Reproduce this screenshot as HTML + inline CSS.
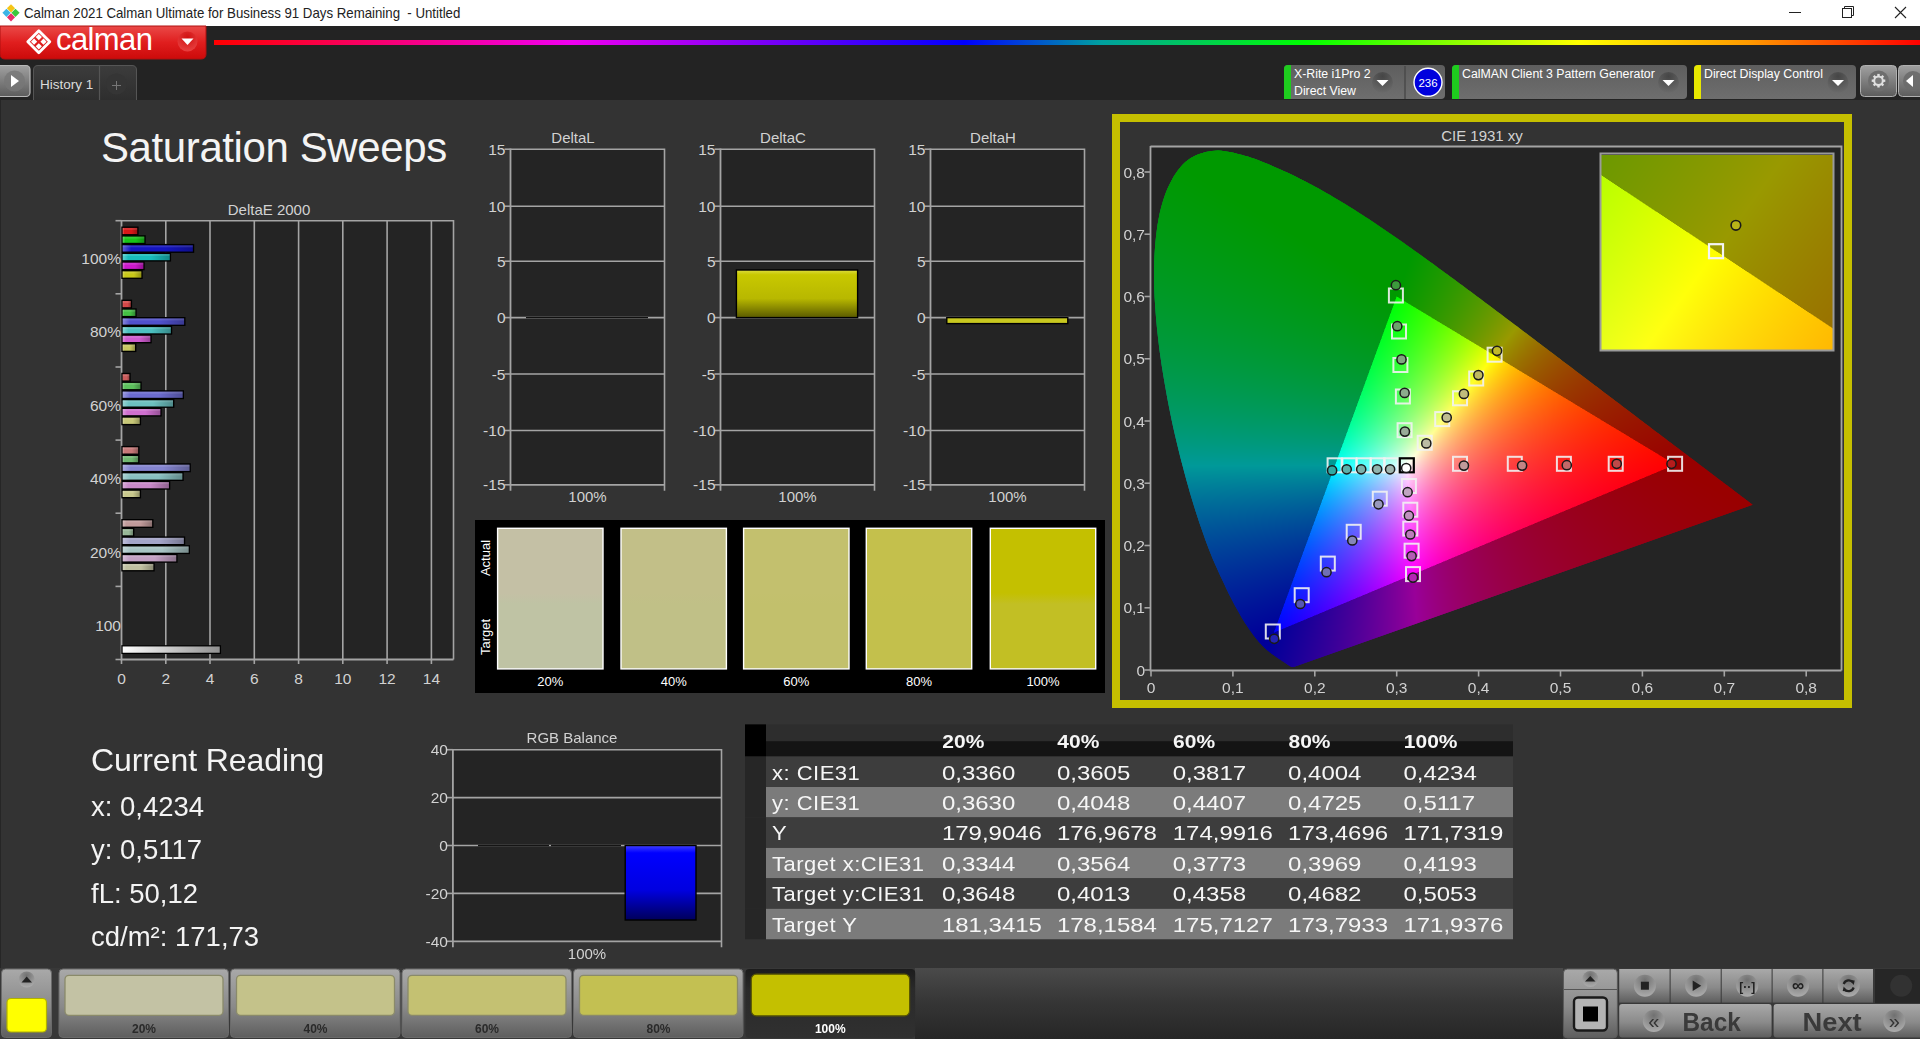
<!DOCTYPE html><html><head><meta charset="utf-8"><title>Calman</title><style>
*{margin:0;padding:0;box-sizing:border-box}
html,body{width:1920px;height:1039px;overflow:hidden;background:#333;font-family:"Liberation Sans",sans-serif}
.a{position:absolute}
#titlebar{left:0;top:0;width:1920px;height:26px;background:#fff}
#topband{left:0;top:26px;width:1920px;height:74px;background:#232323}
#main{left:0;top:100px;width:1920px;height:868px;background:#333;border-left:1px solid #262626}
#bottom{left:0;top:968px;width:1920px;height:71px;background:#383838}
svg text{font-family:"Liberation Sans",sans-serif}
</style></head><body>
<div class="a" id="titlebar"></div><div class="a" id="topband"></div><div class="a" id="main"></div><div class="a" id="bottom"></div>
<svg class="a" style="left:0;top:0" width="1920" height="1039" viewBox="0 0 1920 1039">
<defs>
<linearGradient id="rainbow" x1="0" x2="1" y1="0" y2="0">
<stop offset="0" stop-color="#ff0000"/><stop offset="0.21" stop-color="#f000f0"/><stop offset="0.44" stop-color="#0000ff"/>
<stop offset="0.52" stop-color="#00a0a0"/><stop offset="0.64" stop-color="#00ff00"/><stop offset="0.8" stop-color="#ffff00"/>
<stop offset="0.9" stop-color="#ff9900"/><stop offset="1" stop-color="#ff0000"/></linearGradient>
<linearGradient id="redbtn" x1="0" x2="0" y1="0" y2="1"><stop offset="0" stop-color="#ea4a48"/><stop offset="0.5" stop-color="#e01e1e"/><stop offset="1" stop-color="#cc0a0a"/></linearGradient>
<radialGradient id="reddd" cx="0.5" cy="0.3" r="0.7"><stop offset="0" stop-color="#d01010"/><stop offset="1" stop-color="#e84040"/></radialGradient>
<linearGradient id="grayBtn" x1="0" x2="0" y1="0" y2="1"><stop offset="0" stop-color="#a0a0a0"/><stop offset="1" stop-color="#5c5c5c"/></linearGradient>
<linearGradient id="devBox" x1="0" x2="0" y1="0" y2="1"><stop offset="0" stop-color="#5e5e5e"/><stop offset="1" stop-color="#6e6e6e"/></linearGradient>
<radialGradient id="ddCirc" cx="0.5" cy="0.2" r="0.8"><stop offset="0" stop-color="#454545"/><stop offset="1" stop-color="#6a6a6a"/></radialGradient>
<linearGradient id="tabG" x1="0" x2="0" y1="0" y2="1"><stop offset="0" stop-color="#3c3c3c"/><stop offset="1" stop-color="#2e2e2e"/></linearGradient>
<linearGradient id="barY" x1="0" x2="0" y1="0" y2="1"><stop offset="0" stop-color="#dcdc40"/><stop offset="0.1" stop-color="#c8c800"/><stop offset="0.6" stop-color="#b8b800"/><stop offset="1" stop-color="#5a5a00"/></linearGradient>
<linearGradient id="barB" x1="0" x2="0" y1="0" y2="1"><stop offset="0" stop-color="#4040ff"/><stop offset="0.1" stop-color="#0000ff"/><stop offset="0.6" stop-color="#0000e0"/><stop offset="1" stop-color="#00005a"/></linearGradient>
<linearGradient id="barShade" x1="0" x2="1" y1="0" y2="0"><stop offset="0" stop-color="#fff" stop-opacity="0.3"/><stop offset="0.12" stop-color="#fff" stop-opacity="0"/><stop offset="0.6" stop-color="#000" stop-opacity="0"/><stop offset="1" stop-color="#000" stop-opacity="0.28"/></linearGradient>
<linearGradient id="barW" x1="0" x2="1" y1="0" y2="0"><stop offset="0" stop-color="#ffffff"/><stop offset="1" stop-color="#909090"/></linearGradient>
</defs>
<path d="M11 4.200000000000001L15.1 8.3L11 12.4L6.9 8.3Z" fill="#f5c518"/>
<path d="M15.5 8.700000000000001L19.6 12.8L15.5 16.9L11.4 12.8Z" fill="#3cc83c"/>
<path d="M6.5 8.700000000000001L10.6 12.8L6.5 16.9L2.4000000000000004 12.8Z" fill="#3cb4e6"/>
<path d="M11 13.200000000000001L15.1 17.3L11 21.4L6.9 17.3Z" fill="#e8306a"/>
<text transform="translate(24 17.8) scale(0.914 1)" font-size="14.5" fill="#222">Calman 2021 Calman Ultimate for Business 91 Days Remaining &#160;- Untitled</text>
<path d="M1789 12.5H1801" stroke="#222" stroke-width="1"/>
<rect x="1842.5" y="8.5" width="9" height="9" fill="none" stroke="#222" stroke-width="1"/><path d="M1844.5 8.5V6.5H1853.5V15.5H1851.5" fill="none" stroke="#222" stroke-width="1"/>
<path d="M1895 7L1906 18M1906 7L1895 18" stroke="#222" stroke-width="1.1"/>
<path d="M0 26H206V54Q206 59 201 59H5Q0 59 0 54Z" fill="url(#redbtn)" stroke="#b01010" stroke-width="1"/>
<path d="M38.8 30.700000000000003L49.8 41.7L38.8 52.7L27.799999999999997 41.7Z" fill="none" stroke="#fff" stroke-width="2.8" stroke-linejoin="round"/>
<path d="M38.8 34.0L41.9 37.1L38.8 40.2L35.699999999999996 37.1Z" fill="#fff"/>
<path d="M43.5 38.6L46.6 41.7L43.5 44.800000000000004L40.4 41.7Z" fill="#fff"/>
<path d="M34.099999999999994 38.6L37.199999999999996 41.7L34.099999999999994 44.800000000000004L30.999999999999993 41.7Z" fill="#fff"/>
<path d="M38.8 43.2L41.9 46.300000000000004L38.8 49.400000000000006L35.699999999999996 46.300000000000004Z" fill="#fff"/>
<text x="56" y="49.5" font-size="31" fill="#fff" letter-spacing="-0.6" font-weight="normal">calman</text>
<circle cx="187.5" cy="41.5" r="10" fill="url(#reddd)"/>
<path d="M181.5 38.5H193.5L187.5 45Z" fill="#fff"/>
<rect x="214" y="40" width="1706" height="5" fill="url(#rainbow)"/>
<rect x="-4" y="65.5" width="34" height="31" rx="4" fill="url(#grayBtn)" stroke="#b8b8b8" stroke-width="1.2"/>
<circle cx="14.5" cy="81" r="10.5" fill="#777" opacity="0.8"/>
<path d="M11 75L19 81L11 87Z" fill="#fff"/>
<path d="M33.5 100V70Q33.5 65.5 38 65.5H132Q136.5 65.5 136.5 70V100" fill="url(#tabG)" stroke="#555" stroke-width="1"/>
<path d="M99.5 66V100" stroke="#555" stroke-width="1.2"/>
<text x="40" y="88.5" font-size="13.5" fill="#dcdcdc">History 1</text>
<circle cx="116.5" cy="84" r="10.5" fill="#353535"/>
<path d="M112 85.5H121M116.5 81V90" stroke="#777" stroke-width="1"/>
<rect x="1284" y="65" width="161" height="34" rx="4" fill="url(#devBox)"/>
<path d="M1284 99V69Q1284 65 1288 65H1291V99Z" fill="#1ecc1e"/>
<text x="1294" y="78" font-size="12.3" fill="#fff">X-Rite i1Pro 2</text>
<text x="1294" y="95" font-size="12.3" fill="#fff">Direct View</text>
<circle cx="1382.5" cy="82.5" r="10.5" fill="url(#ddCirc)"/><path d="M1376.5 80.0H1388.5L1382.5 86.0Z" fill="#fff"/>
<path d="M1405 66V99" stroke="#4a4a4a" stroke-width="1.5"/>
<circle cx="1428" cy="82.3" r="14" fill="#0000dd" stroke="#fff" stroke-width="1.4"/>
<text x="1428" y="86.5" font-size="11.5" fill="#fff" text-anchor="middle">236</text>
<rect x="1452" y="65" width="235" height="34" rx="4" fill="url(#devBox)"/>
<path d="M1452 99V69Q1452 65 1456 65H1459V99Z" fill="#1ecc1e"/>
<text x="1462" y="78" font-size="12.3" fill="#fff">CalMAN Client 3 Pattern Generator</text>
<circle cx="1668.5" cy="82.5" r="10.5" fill="url(#ddCirc)"/><path d="M1662.5 80.0H1674.5L1668.5 86.0Z" fill="#fff"/>
<rect x="1694" y="65" width="162" height="34" rx="4" fill="url(#devBox)"/>
<path d="M1694 99V69Q1694 65 1698 65H1701V99Z" fill="#e8e800"/>
<text x="1704" y="78" font-size="12.3" fill="#fff">Direct Display Control</text>
<circle cx="1838" cy="82.5" r="10.5" fill="url(#ddCirc)"/><path d="M1832 80.0H1844L1838 86.0Z" fill="#fff"/>
<rect x="1860.5" y="65.5" width="36" height="31" rx="4" fill="url(#grayBtn)" stroke="#b0b0b0" stroke-width="1"/>
<circle cx="1878.5" cy="81" r="10.5" fill="#6e6e6e"/>
<rect x="1877.3" y="73.9" width="2.4" height="3" fill="#e0e0e0" transform="rotate(0 1878.5 80.7)"/><rect x="1877.3" y="73.9" width="2.4" height="3" fill="#e0e0e0" transform="rotate(45 1878.5 80.7)"/><rect x="1877.3" y="73.9" width="2.4" height="3" fill="#e0e0e0" transform="rotate(90 1878.5 80.7)"/><rect x="1877.3" y="73.9" width="2.4" height="3" fill="#e0e0e0" transform="rotate(135 1878.5 80.7)"/><rect x="1877.3" y="73.9" width="2.4" height="3" fill="#e0e0e0" transform="rotate(180 1878.5 80.7)"/><rect x="1877.3" y="73.9" width="2.4" height="3" fill="#e0e0e0" transform="rotate(225 1878.5 80.7)"/><rect x="1877.3" y="73.9" width="2.4" height="3" fill="#e0e0e0" transform="rotate(270 1878.5 80.7)"/><rect x="1877.3" y="73.9" width="2.4" height="3" fill="#e0e0e0" transform="rotate(315 1878.5 80.7)"/>
<circle cx="1878.5" cy="80.7" r="4.3" fill="#7a7a7a" stroke="#e0e0e0" stroke-width="2"/>
<rect x="1898.5" y="65.5" width="30" height="31" rx="4" fill="url(#grayBtn)" stroke="#b0b0b0" stroke-width="1"/>
<circle cx="1913" cy="81" r="10" fill="#6c6c6c" opacity="0.9"/>
<path d="M1906 81L1913 75V87Z" fill="#fff"/>
<text x="101" y="162" font-size="42" fill="#f4f4f4" letter-spacing="-0.4">Saturation Sweeps</text>
<rect x="121.5" y="220.7" width="332.0" height="438.8" fill="#242424"/>
<path d="M165.8 220.7V659.5" stroke="#a4a4a4" stroke-width="1.6"/>
<path d="M210.0 220.7V659.5" stroke="#a4a4a4" stroke-width="1.6"/>
<path d="M254.3 220.7V659.5" stroke="#a4a4a4" stroke-width="1.6"/>
<path d="M298.6 220.7V659.5" stroke="#a4a4a4" stroke-width="1.6"/>
<path d="M342.8 220.7V659.5" stroke="#a4a4a4" stroke-width="1.6"/>
<path d="M387.1 220.7V659.5" stroke="#a4a4a4" stroke-width="1.6"/>
<path d="M431.4 220.7V659.5" stroke="#a4a4a4" stroke-width="1.6"/>
<path d="M121.5 220.7H453.5V659.5" fill="none" stroke="#a4a4a4" stroke-width="1.6"/>
<path d="M121.5 219.89999999999998V659.5H453.5" fill="none" stroke="#a4a4a4" stroke-width="1.8"/>
<path d="M115.5 220.7H121.5" stroke="#a4a4a4" stroke-width="1.6"/>
<path d="M115.5 293.8H121.5" stroke="#a4a4a4" stroke-width="1.6"/>
<path d="M115.5 367.0H121.5" stroke="#a4a4a4" stroke-width="1.6"/>
<path d="M115.5 440.1H121.5" stroke="#a4a4a4" stroke-width="1.6"/>
<path d="M115.5 513.2H121.5" stroke="#a4a4a4" stroke-width="1.6"/>
<path d="M115.5 586.4H121.5" stroke="#a4a4a4" stroke-width="1.6"/>
<path d="M115.5 659.5H121.5" stroke="#a4a4a4" stroke-width="1.6"/>
<path d="M121.5 659.5V664.0" stroke="#a4a4a4" stroke-width="1.6"/>
<text x="121.5" y="684" font-size="15.5" fill="#d2d2d2" text-anchor="middle">0</text>
<path d="M165.8 659.5V664.0" stroke="#a4a4a4" stroke-width="1.6"/>
<text x="165.8" y="684" font-size="15.5" fill="#d2d2d2" text-anchor="middle">2</text>
<path d="M210.0 659.5V664.0" stroke="#a4a4a4" stroke-width="1.6"/>
<text x="210.0" y="684" font-size="15.5" fill="#d2d2d2" text-anchor="middle">4</text>
<path d="M254.3 659.5V664.0" stroke="#a4a4a4" stroke-width="1.6"/>
<text x="254.3" y="684" font-size="15.5" fill="#d2d2d2" text-anchor="middle">6</text>
<path d="M298.6 659.5V664.0" stroke="#a4a4a4" stroke-width="1.6"/>
<text x="298.6" y="684" font-size="15.5" fill="#d2d2d2" text-anchor="middle">8</text>
<path d="M342.8 659.5V664.0" stroke="#a4a4a4" stroke-width="1.6"/>
<text x="342.8" y="684" font-size="15.5" fill="#d2d2d2" text-anchor="middle">10</text>
<path d="M387.1 659.5V664.0" stroke="#a4a4a4" stroke-width="1.6"/>
<text x="387.1" y="684" font-size="15.5" fill="#d2d2d2" text-anchor="middle">12</text>
<path d="M431.4 659.5V664.0" stroke="#a4a4a4" stroke-width="1.6"/>
<text x="431.4" y="684" font-size="15.5" fill="#d2d2d2" text-anchor="middle">14</text>
<text x="269" y="215" font-size="15" fill="#d2d2d2" text-anchor="middle">DeltaE 2000</text>
<text x="121" y="263.8" font-size="15.5" fill="#d2d2d2" text-anchor="end">100%</text>
<text x="121" y="337.3" font-size="15.5" fill="#d2d2d2" text-anchor="end">80%</text>
<text x="121" y="410.8" font-size="15.5" fill="#d2d2d2" text-anchor="end">60%</text>
<text x="121" y="484.4" font-size="15.5" fill="#d2d2d2" text-anchor="end">40%</text>
<text x="121" y="557.9" font-size="15.5" fill="#d2d2d2" text-anchor="end">20%</text>
<text x="121" y="631.4" font-size="15.5" fill="#d2d2d2" text-anchor="end">100</text>
<rect x="122.0" y="227.2" width="15.9" height="7.6" fill="#d81818" stroke="#000" stroke-width="1.4"/>
<rect x="122.7" y="227.9" width="14.5" height="6.2" fill="url(#barShade)"/>
<rect x="122.7" y="227.9" width="14.5" height="2" fill="#fff" opacity="0.12"/>
<rect x="122.0" y="235.9" width="23.0" height="7.6" fill="#18c418" stroke="#000" stroke-width="1.4"/>
<rect x="122.7" y="236.6" width="21.6" height="6.2" fill="url(#barShade)"/>
<rect x="122.7" y="236.6" width="21.6" height="2" fill="#fff" opacity="0.12"/>
<rect x="122.0" y="244.6" width="71.5" height="7.6" fill="#1414c0" stroke="#000" stroke-width="1.4"/>
<rect x="122.7" y="245.3" width="70.1" height="6.2" fill="url(#barShade)"/>
<rect x="122.7" y="245.3" width="70.1" height="2" fill="#fff" opacity="0.12"/>
<rect x="122.0" y="253.3" width="48.4" height="7.6" fill="#18bcbc" stroke="#000" stroke-width="1.4"/>
<rect x="122.7" y="254.0" width="47.0" height="6.2" fill="url(#barShade)"/>
<rect x="122.7" y="254.0" width="47.0" height="2" fill="#fff" opacity="0.12"/>
<rect x="122.0" y="262.0" width="22.0" height="7.6" fill="#cc18cc" stroke="#000" stroke-width="1.4"/>
<rect x="122.7" y="262.7" width="20.6" height="6.2" fill="url(#barShade)"/>
<rect x="122.7" y="262.7" width="20.6" height="2" fill="#fff" opacity="0.12"/>
<rect x="122.0" y="270.7" width="20.0" height="7.6" fill="#c8c818" stroke="#000" stroke-width="1.4"/>
<rect x="122.7" y="271.4" width="18.6" height="6.2" fill="url(#barShade)"/>
<rect x="122.7" y="271.4" width="18.6" height="2" fill="#fff" opacity="0.12"/>
<rect x="122.0" y="300.3" width="9.4" height="7.6" fill="#d44848" stroke="#000" stroke-width="1.4"/>
<rect x="122.7" y="301.0" width="8.0" height="6.2" fill="url(#barShade)"/>
<rect x="122.7" y="301.0" width="8.0" height="2" fill="#fff" opacity="0.12"/>
<rect x="122.0" y="309.0" width="14.0" height="7.6" fill="#44c044" stroke="#000" stroke-width="1.4"/>
<rect x="122.7" y="309.7" width="12.6" height="6.2" fill="url(#barShade)"/>
<rect x="122.7" y="309.7" width="12.6" height="2" fill="#fff" opacity="0.12"/>
<rect x="122.0" y="317.7" width="62.8" height="7.6" fill="#5050cc" stroke="#000" stroke-width="1.4"/>
<rect x="122.7" y="318.4" width="61.4" height="6.2" fill="url(#barShade)"/>
<rect x="122.7" y="318.4" width="61.4" height="2" fill="#fff" opacity="0.12"/>
<rect x="122.0" y="326.4" width="49.5" height="7.6" fill="#4cc0c0" stroke="#000" stroke-width="1.4"/>
<rect x="122.7" y="327.1" width="48.1" height="6.2" fill="url(#barShade)"/>
<rect x="122.7" y="327.1" width="48.1" height="2" fill="#fff" opacity="0.12"/>
<rect x="122.0" y="335.1" width="29.0" height="7.6" fill="#d05cd0" stroke="#000" stroke-width="1.4"/>
<rect x="122.7" y="335.8" width="27.6" height="6.2" fill="url(#barShade)"/>
<rect x="122.7" y="335.8" width="27.6" height="2" fill="#fff" opacity="0.12"/>
<rect x="122.0" y="343.8" width="13.7" height="7.6" fill="#c8c860" stroke="#000" stroke-width="1.4"/>
<rect x="122.7" y="344.5" width="12.3" height="6.2" fill="url(#barShade)"/>
<rect x="122.7" y="344.5" width="12.3" height="2" fill="#fff" opacity="0.12"/>
<rect x="122.0" y="373.5" width="8.0" height="7.6" fill="#cc5c5c" stroke="#000" stroke-width="1.4"/>
<rect x="122.7" y="374.2" width="6.6" height="6.2" fill="url(#barShade)"/>
<rect x="122.7" y="374.2" width="6.6" height="2" fill="#fff" opacity="0.12"/>
<rect x="122.0" y="382.2" width="19.0" height="7.6" fill="#5cc05c" stroke="#000" stroke-width="1.4"/>
<rect x="122.7" y="382.9" width="17.6" height="6.2" fill="url(#barShade)"/>
<rect x="122.7" y="382.9" width="17.6" height="2" fill="#fff" opacity="0.12"/>
<rect x="122.0" y="390.9" width="61.3" height="7.6" fill="#6c6cd0" stroke="#000" stroke-width="1.4"/>
<rect x="122.7" y="391.6" width="59.9" height="6.2" fill="url(#barShade)"/>
<rect x="122.7" y="391.6" width="59.9" height="2" fill="#fff" opacity="0.12"/>
<rect x="122.0" y="399.6" width="51.7" height="7.6" fill="#6cc0c0" stroke="#000" stroke-width="1.4"/>
<rect x="122.7" y="400.3" width="50.3" height="6.2" fill="url(#barShade)"/>
<rect x="122.7" y="400.3" width="50.3" height="2" fill="#fff" opacity="0.12"/>
<rect x="122.0" y="408.3" width="39.0" height="7.6" fill="#d070d0" stroke="#000" stroke-width="1.4"/>
<rect x="122.7" y="409.0" width="37.6" height="6.2" fill="url(#barShade)"/>
<rect x="122.7" y="409.0" width="37.6" height="2" fill="#fff" opacity="0.12"/>
<rect x="122.0" y="417.0" width="18.4" height="7.6" fill="#c8c878" stroke="#000" stroke-width="1.4"/>
<rect x="122.7" y="417.7" width="17.0" height="6.2" fill="url(#barShade)"/>
<rect x="122.7" y="417.7" width="17.0" height="2" fill="#fff" opacity="0.12"/>
<rect x="122.0" y="446.6" width="16.8" height="7.6" fill="#c87878" stroke="#000" stroke-width="1.4"/>
<rect x="122.7" y="447.3" width="15.4" height="6.2" fill="url(#barShade)"/>
<rect x="122.7" y="447.3" width="15.4" height="2" fill="#fff" opacity="0.12"/>
<rect x="122.0" y="455.3" width="16.8" height="7.6" fill="#70b870" stroke="#000" stroke-width="1.4"/>
<rect x="122.7" y="456.0" width="15.4" height="6.2" fill="url(#barShade)"/>
<rect x="122.7" y="456.0" width="15.4" height="2" fill="#fff" opacity="0.12"/>
<rect x="122.0" y="464.0" width="68.2" height="7.6" fill="#8484d0" stroke="#000" stroke-width="1.4"/>
<rect x="122.7" y="464.7" width="66.8" height="6.2" fill="url(#barShade)"/>
<rect x="122.7" y="464.7" width="66.8" height="2" fill="#fff" opacity="0.12"/>
<rect x="122.0" y="472.7" width="61.0" height="7.6" fill="#88c0c0" stroke="#000" stroke-width="1.4"/>
<rect x="122.7" y="473.4" width="59.6" height="6.2" fill="url(#barShade)"/>
<rect x="122.7" y="473.4" width="59.6" height="2" fill="#fff" opacity="0.12"/>
<rect x="122.0" y="481.4" width="47.6" height="7.6" fill="#c888c8" stroke="#000" stroke-width="1.4"/>
<rect x="122.7" y="482.1" width="46.2" height="6.2" fill="url(#barShade)"/>
<rect x="122.7" y="482.1" width="46.2" height="2" fill="#fff" opacity="0.12"/>
<rect x="122.0" y="490.1" width="18.4" height="7.6" fill="#c8c88c" stroke="#000" stroke-width="1.4"/>
<rect x="122.7" y="490.8" width="17.0" height="6.2" fill="url(#barShade)"/>
<rect x="122.7" y="490.8" width="17.0" height="2" fill="#fff" opacity="0.12"/>
<rect x="122.0" y="519.7" width="30.8" height="7.6" fill="#c09a9a" stroke="#000" stroke-width="1.4"/>
<rect x="122.7" y="520.4" width="29.4" height="6.2" fill="url(#barShade)"/>
<rect x="122.7" y="520.4" width="29.4" height="2" fill="#fff" opacity="0.12"/>
<rect x="122.0" y="528.4" width="11.7" height="7.6" fill="#98b898" stroke="#000" stroke-width="1.4"/>
<rect x="122.7" y="529.1" width="10.3" height="6.2" fill="url(#barShade)"/>
<rect x="122.7" y="529.1" width="10.3" height="2" fill="#fff" opacity="0.12"/>
<rect x="122.0" y="537.1" width="62.5" height="7.6" fill="#a4a4c8" stroke="#000" stroke-width="1.4"/>
<rect x="122.7" y="537.8" width="61.1" height="6.2" fill="url(#barShade)"/>
<rect x="122.7" y="537.8" width="61.1" height="2" fill="#fff" opacity="0.12"/>
<rect x="122.0" y="545.8" width="67.3" height="7.6" fill="#a8c4c4" stroke="#000" stroke-width="1.4"/>
<rect x="122.7" y="546.5" width="65.9" height="6.2" fill="url(#barShade)"/>
<rect x="122.7" y="546.5" width="65.9" height="2" fill="#fff" opacity="0.12"/>
<rect x="122.0" y="554.5" width="54.9" height="7.6" fill="#c4a0c4" stroke="#000" stroke-width="1.4"/>
<rect x="122.7" y="555.2" width="53.5" height="6.2" fill="url(#barShade)"/>
<rect x="122.7" y="555.2" width="53.5" height="2" fill="#fff" opacity="0.12"/>
<rect x="122.0" y="563.2" width="32.0" height="7.6" fill="#c0c0a0" stroke="#000" stroke-width="1.4"/>
<rect x="122.7" y="563.9" width="30.6" height="6.2" fill="url(#barShade)"/>
<rect x="122.7" y="563.9" width="30.6" height="2" fill="#fff" opacity="0.12"/>
<rect x="122.0" y="645.8" width="98.4" height="7.6" fill="url(#barW)" stroke="#000" stroke-width="1.3"/>
<rect x="510.5" y="149.2" width="154" height="335.6" fill="#242424"/>
<path d="M510.5 206.2H664.5" stroke="#a4a4a4" stroke-width="1.6"/>
<path d="M510.5 261.2H664.5" stroke="#a4a4a4" stroke-width="1.6"/>
<path d="M510.5 317.6H664.5" stroke="#a4a4a4" stroke-width="1.6"/>
<path d="M510.5 374.0H664.5" stroke="#a4a4a4" stroke-width="1.6"/>
<path d="M510.5 430.5H664.5" stroke="#a4a4a4" stroke-width="1.6"/>
<path d="M510.5 149.2H664.5V490.8" fill="none" stroke="#a4a4a4" stroke-width="1.6"/>
<path d="M510.5 148.39999999999998V490.8M510.5 484.8H664.5" fill="none" stroke="#a4a4a4" stroke-width="1.8"/>
<path d="M504.5 149.2H510.5" stroke="#a4a4a4" stroke-width="1.6"/>
<text x="505.5" y="154.7" font-size="15.5" fill="#d2d2d2" text-anchor="end">15</text>
<path d="M504.5 206.2H510.5" stroke="#a4a4a4" stroke-width="1.6"/>
<text x="505.5" y="211.7" font-size="15.5" fill="#d2d2d2" text-anchor="end">10</text>
<path d="M504.5 261.2H510.5" stroke="#a4a4a4" stroke-width="1.6"/>
<text x="505.5" y="266.7" font-size="15.5" fill="#d2d2d2" text-anchor="end">5</text>
<path d="M504.5 317.6H510.5" stroke="#a4a4a4" stroke-width="1.6"/>
<text x="505.5" y="323.1" font-size="15.5" fill="#d2d2d2" text-anchor="end">0</text>
<path d="M504.5 374.0H510.5" stroke="#a4a4a4" stroke-width="1.6"/>
<text x="505.5" y="379.5" font-size="15.5" fill="#d2d2d2" text-anchor="end">-5</text>
<path d="M504.5 430.5H510.5" stroke="#a4a4a4" stroke-width="1.6"/>
<text x="505.5" y="436.0" font-size="15.5" fill="#d2d2d2" text-anchor="end">-10</text>
<path d="M504.5 484.8H510.5" stroke="#a4a4a4" stroke-width="1.6"/>
<text x="505.5" y="490.3" font-size="15.5" fill="#d2d2d2" text-anchor="end">-15</text>
<text x="573.0" y="143" font-size="15" fill="#d2d2d2" text-anchor="middle">DeltaL</text>
<text x="587.5" y="502" font-size="15" fill="#d2d2d2" text-anchor="middle">100%</text>
<rect x="720.5" y="149.2" width="154" height="335.6" fill="#242424"/>
<path d="M720.5 206.2H874.5" stroke="#a4a4a4" stroke-width="1.6"/>
<path d="M720.5 261.2H874.5" stroke="#a4a4a4" stroke-width="1.6"/>
<path d="M720.5 317.6H874.5" stroke="#a4a4a4" stroke-width="1.6"/>
<path d="M720.5 374.0H874.5" stroke="#a4a4a4" stroke-width="1.6"/>
<path d="M720.5 430.5H874.5" stroke="#a4a4a4" stroke-width="1.6"/>
<path d="M720.5 149.2H874.5V490.8" fill="none" stroke="#a4a4a4" stroke-width="1.6"/>
<path d="M720.5 148.39999999999998V490.8M720.5 484.8H874.5" fill="none" stroke="#a4a4a4" stroke-width="1.8"/>
<path d="M714.5 149.2H720.5" stroke="#a4a4a4" stroke-width="1.6"/>
<text x="715.5" y="154.7" font-size="15.5" fill="#d2d2d2" text-anchor="end">15</text>
<path d="M714.5 206.2H720.5" stroke="#a4a4a4" stroke-width="1.6"/>
<text x="715.5" y="211.7" font-size="15.5" fill="#d2d2d2" text-anchor="end">10</text>
<path d="M714.5 261.2H720.5" stroke="#a4a4a4" stroke-width="1.6"/>
<text x="715.5" y="266.7" font-size="15.5" fill="#d2d2d2" text-anchor="end">5</text>
<path d="M714.5 317.6H720.5" stroke="#a4a4a4" stroke-width="1.6"/>
<text x="715.5" y="323.1" font-size="15.5" fill="#d2d2d2" text-anchor="end">0</text>
<path d="M714.5 374.0H720.5" stroke="#a4a4a4" stroke-width="1.6"/>
<text x="715.5" y="379.5" font-size="15.5" fill="#d2d2d2" text-anchor="end">-5</text>
<path d="M714.5 430.5H720.5" stroke="#a4a4a4" stroke-width="1.6"/>
<text x="715.5" y="436.0" font-size="15.5" fill="#d2d2d2" text-anchor="end">-10</text>
<path d="M714.5 484.8H720.5" stroke="#a4a4a4" stroke-width="1.6"/>
<text x="715.5" y="490.3" font-size="15.5" fill="#d2d2d2" text-anchor="end">-15</text>
<text x="783.0" y="143" font-size="15" fill="#d2d2d2" text-anchor="middle">DeltaC</text>
<text x="797.5" y="502" font-size="15" fill="#d2d2d2" text-anchor="middle">100%</text>
<rect x="930.5" y="149.2" width="154" height="335.6" fill="#242424"/>
<path d="M930.5 206.2H1084.5" stroke="#a4a4a4" stroke-width="1.6"/>
<path d="M930.5 261.2H1084.5" stroke="#a4a4a4" stroke-width="1.6"/>
<path d="M930.5 317.6H1084.5" stroke="#a4a4a4" stroke-width="1.6"/>
<path d="M930.5 374.0H1084.5" stroke="#a4a4a4" stroke-width="1.6"/>
<path d="M930.5 430.5H1084.5" stroke="#a4a4a4" stroke-width="1.6"/>
<path d="M930.5 149.2H1084.5V490.8" fill="none" stroke="#a4a4a4" stroke-width="1.6"/>
<path d="M930.5 148.39999999999998V490.8M930.5 484.8H1084.5" fill="none" stroke="#a4a4a4" stroke-width="1.8"/>
<path d="M924.5 149.2H930.5" stroke="#a4a4a4" stroke-width="1.6"/>
<text x="925.5" y="154.7" font-size="15.5" fill="#d2d2d2" text-anchor="end">15</text>
<path d="M924.5 206.2H930.5" stroke="#a4a4a4" stroke-width="1.6"/>
<text x="925.5" y="211.7" font-size="15.5" fill="#d2d2d2" text-anchor="end">10</text>
<path d="M924.5 261.2H930.5" stroke="#a4a4a4" stroke-width="1.6"/>
<text x="925.5" y="266.7" font-size="15.5" fill="#d2d2d2" text-anchor="end">5</text>
<path d="M924.5 317.6H930.5" stroke="#a4a4a4" stroke-width="1.6"/>
<text x="925.5" y="323.1" font-size="15.5" fill="#d2d2d2" text-anchor="end">0</text>
<path d="M924.5 374.0H930.5" stroke="#a4a4a4" stroke-width="1.6"/>
<text x="925.5" y="379.5" font-size="15.5" fill="#d2d2d2" text-anchor="end">-5</text>
<path d="M924.5 430.5H930.5" stroke="#a4a4a4" stroke-width="1.6"/>
<text x="925.5" y="436.0" font-size="15.5" fill="#d2d2d2" text-anchor="end">-10</text>
<path d="M924.5 484.8H930.5" stroke="#a4a4a4" stroke-width="1.6"/>
<text x="925.5" y="490.3" font-size="15.5" fill="#d2d2d2" text-anchor="end">-15</text>
<text x="993.0" y="143" font-size="15" fill="#d2d2d2" text-anchor="middle">DeltaH</text>
<text x="1007.5" y="502" font-size="15" fill="#d2d2d2" text-anchor="middle">100%</text>
<path d="M526 317.6H648" stroke="#111" stroke-width="1.2"/>
<rect x="736.4" y="270" width="121.2" height="47.6" fill="url(#barY)" stroke="#000" stroke-width="1.4"/>
<rect x="946.8" y="317.6" width="121" height="6" fill="#c8c820" stroke="#000" stroke-width="1.4"/>
<rect x="475" y="520" width="630" height="173" fill="#000"/>
<defs><linearGradient id="pg0" x1="0" x2="0" y1="0" y2="1"><stop offset="0.46" stop-color="#c4c0a5"/><stop offset="0.54" stop-color="#bfc3a4"/></linearGradient></defs>
<rect x="497.6" y="528.3" width="105.4" height="140.6" fill="url(#pg0)" stroke="#fff" stroke-width="1.4"/>
<text x="550.3" y="685.5" font-size="13" fill="#fff" text-anchor="middle">20%</text>
<defs><linearGradient id="pg1" x1="0" x2="0" y1="0" y2="1"><stop offset="0.46" stop-color="#c2bf88"/><stop offset="0.54" stop-color="#c0c087"/></linearGradient></defs>
<rect x="621.0" y="528.3" width="105.4" height="140.6" fill="url(#pg1)" stroke="#fff" stroke-width="1.4"/>
<text x="673.7" y="685.5" font-size="13" fill="#fff" text-anchor="middle">40%</text>
<defs><linearGradient id="pg2" x1="0" x2="0" y1="0" y2="1"><stop offset="0.46" stop-color="#c3c06e"/><stop offset="0.54" stop-color="#c2c06c"/></linearGradient></defs>
<rect x="743.5999999999999" y="528.3" width="105.4" height="140.6" fill="url(#pg2)" stroke="#fff" stroke-width="1.4"/>
<text x="796.3" y="685.5" font-size="13" fill="#fff" text-anchor="middle">60%</text>
<defs><linearGradient id="pg3" x1="0" x2="0" y1="0" y2="1"><stop offset="0.46" stop-color="#c4c04c"/><stop offset="0.54" stop-color="#c3c04c"/></linearGradient></defs>
<rect x="866.3" y="528.3" width="105.4" height="140.6" fill="url(#pg3)" stroke="#fff" stroke-width="1.4"/>
<text x="919" y="685.5" font-size="13" fill="#fff" text-anchor="middle">80%</text>
<defs><linearGradient id="pg4" x1="0" x2="0" y1="0" y2="1"><stop offset="0.46" stop-color="#c4c000"/><stop offset="0.54" stop-color="#c2bf24"/></linearGradient></defs>
<rect x="990.3" y="528.3" width="105.4" height="140.6" fill="url(#pg4)" stroke="#fff" stroke-width="1.4"/>
<text x="1043" y="685.5" font-size="13" fill="#fff" text-anchor="middle">100%</text>
<text transform="translate(490 558) rotate(-90)" font-size="13" fill="#fff" text-anchor="middle">Actual</text>
<text transform="translate(490 637) rotate(-90)" font-size="13" fill="#fff" text-anchor="middle">Target</text>
<rect x="1116" y="118" width="732" height="586" fill="none" stroke="#c5bf00" stroke-width="8"/>
<text x="1482" y="141" font-size="15" fill="#d2d2d2" text-anchor="middle">CIE 1931 xy</text>
<rect x="1151" y="147" width="690" height="523" fill="#242424"/>
</svg>
<div class="a" style="left:1151px;top:147px;width:690px;height:523px;clip-path:path('M142.6 519.9 L142.6 519.9 L142.6 519.9 L142.6 519.9 L142.6 519.9 L142.6 519.9 L142.6 519.9 L142.5 519.9 L142.5 519.9 L142.5 519.9 L142.5 519.9 L142.5 519.9 L142.5 519.9 L142.5 519.9 L142.5 519.9 L142.4 519.9 L142.4 519.9 L142.4 519.9 L142.4 519.9 L142.4 519.9 L142.3 519.9 L142.3 519.9 L142.3 519.9 L142.3 519.9 L142.3 519.9 L142.2 519.9 L142.2 519.9 L142.2 519.9 L142.2 519.9 L142.2 519.9 L142.1 519.9 L142.1 519.9 L142.1 519.9 L142.1 520.0 L142.1 520.0 L142.1 520.0 L142.0 520.0 L142.0 520.0 L142.0 520.0 L142.0 520.0 L142.0 520.0 L141.9 520.0 L141.9 520.0 L141.9 520.0 L141.9 520.0 L141.8 520.0 L141.8 520.0 L141.8 520.0 L141.8 520.0 L141.7 520.0 L141.7 520.0 L141.7 520.0 L141.6 520.0 L141.6 520.0 L141.6 520.0 L141.5 520.0 L141.5 520.0 L141.5 520.0 L141.4 520.0 L141.4 520.0 L141.3 520.0 L141.3 520.0 L141.3 520.0 L141.2 520.0 L141.2 520.0 L141.2 520.0 L141.1 520.0 L141.1 520.0 L141.0 520.0 L141.0 520.0 L140.9 520.0 L140.9 520.0 L140.8 520.0 L140.8 520.0 L140.7 519.9 L140.7 519.9 L140.6 519.9 L140.6 519.9 L140.5 519.9 L140.5 519.9 L140.4 519.8 L140.3 519.8 L140.2 519.8 L140.1 519.7 L140.1 519.7 L140.0 519.6 L139.9 519.6 L139.8 519.6 L139.7 519.5 L139.6 519.5 L139.5 519.4 L139.4 519.3 L139.3 519.3 L139.2 519.2 L139.1 519.2 L138.9 519.1 L138.8 519.0 L138.7 518.9 L138.6 518.9 L138.4 518.8 L138.3 518.7 L138.2 518.6 L138.0 518.5 L137.9 518.4 L137.7 518.3 L137.6 518.2 L137.4 518.1 L137.2 518.0 L137.0 517.9 L136.9 517.8 L136.7 517.7 L136.5 517.5 L136.3 517.4 L136.1 517.3 L135.9 517.1 L135.7 517.0 L135.5 516.9 L135.3 516.7 L135.1 516.6 L134.9 516.4 L134.7 516.2 L134.4 516.1 L134.2 515.9 L133.9 515.7 L133.7 515.6 L133.4 515.4 L133.1 515.2 L132.8 515.0 L132.6 514.8 L132.3 514.6 L131.9 514.4 L131.6 514.2 L131.3 514.0 L130.9 513.8 L130.6 513.5 L130.2 513.3 L129.9 513.0 L129.5 512.8 L129.1 512.5 L128.7 512.3 L128.3 512.0 L127.9 511.7 L127.4 511.4 L127.0 511.1 L126.6 510.8 L126.1 510.5 L125.6 510.2 L125.2 509.9 L124.7 509.6 L124.2 509.2 L123.7 508.8 L123.1 508.5 L122.6 508.1 L122.1 507.7 L121.5 507.3 L120.9 506.9 L120.3 506.4 L119.8 506.0 L119.1 505.5 L118.5 505.0 L117.9 504.5 L117.3 504.0 L116.6 503.4 L116.0 502.9 L115.3 502.4 L114.7 501.8 L114.0 501.2 L113.3 500.5 L112.5 499.8 L111.8 499.0 L111.0 498.2 L110.2 497.3 L109.3 496.4 L108.4 495.4 L107.5 494.4 L106.6 493.3 L105.7 492.2 L104.7 491.0 L103.7 489.8 L102.7 488.4 L101.7 487.0 L100.6 485.5 L99.5 484.0 L98.4 482.4 L97.2 480.8 L96.1 479.1 L94.9 477.3 L93.6 475.4 L92.4 473.3 L91.1 471.2 L89.8 468.9 L88.4 466.6 L87.0 464.1 L85.6 461.6 L84.1 458.9 L82.7 456.2 L81.2 453.3 L79.6 450.3 L78.0 447.2 L76.4 443.9 L74.8 440.4 L73.1 436.8 L71.3 433.1 L69.5 429.2 L67.7 425.2 L65.8 421.1 L63.9 416.8 L62.0 412.4 L60.1 407.8 L58.2 403.0 L56.3 398.1 L54.4 392.9 L52.5 387.6 L50.6 382.1 L48.6 376.5 L46.7 370.6 L44.8 364.7 L42.8 358.6 L40.9 352.3 L39.0 345.9 L37.2 339.4 L35.3 332.7 L33.4 325.7 L31.5 318.6 L29.6 311.4 L27.8 304.0 L26.0 296.5 L24.2 288.9 L22.4 281.3 L20.8 273.7 L19.2 266.1 L17.7 258.4 L16.2 250.7 L14.8 242.8 L13.4 234.9 L12.1 226.9 L10.8 219.0 L9.6 211.0 L8.5 203.2 L7.6 195.4 L6.7 187.8 L5.9 180.3 L5.2 172.8 L4.6 165.3 L4.1 157.8 L3.6 150.4 L3.3 143.1 L3.1 136.0 L3.0 128.9 L3.0 122.1 L3.2 115.4 L3.5 108.8 L3.9 102.3 L4.4 95.9 L5.0 89.7 L5.8 83.6 L6.6 77.6 L7.6 71.9 L8.7 66.3 L10.0 61.0 L11.4 56.0 L12.9 51.2 L14.5 46.6 L16.3 42.1 L18.2 37.9 L20.3 33.9 L22.4 30.1 L24.7 26.6 L27.0 23.3 L29.4 20.3 L31.8 17.5 L34.4 15.1 L37.0 12.9 L39.8 11.0 L42.6 9.4 L45.6 8.0 L48.6 6.9 L51.6 5.9 L54.7 5.1 L57.8 4.5 L60.9 4.0 L64.0 3.7 L67.1 3.6 L70.4 3.8 L73.6 4.2 L76.9 4.7 L80.2 5.3 L83.5 6.1 L86.9 6.9 L90.2 7.8 L93.5 8.7 L96.8 9.6 L100.1 10.7 L103.5 11.8 L106.8 13.1 L110.2 14.4 L113.5 15.7 L116.9 17.1 L120.2 18.5 L123.5 20.0 L126.7 21.4 L129.9 22.8 L133.1 24.2 L136.3 25.6 L139.4 27.1 L142.5 28.6 L145.6 30.1 L148.7 31.7 L151.8 33.3 L154.9 34.8 L158.0 36.4 L161.0 38.0 L164.1 39.7 L167.1 41.3 L170.1 43.0 L173.1 44.7 L176.1 46.4 L179.1 48.1 L182.1 49.9 L185.1 51.7 L188.1 53.4 L191.0 55.2 L194.0 57.0 L197.0 58.9 L200.0 60.7 L202.9 62.6 L205.9 64.5 L208.8 66.4 L211.8 68.3 L214.7 70.2 L217.7 72.1 L220.6 74.0 L223.6 76.0 L226.5 78.0 L229.4 79.9 L232.4 81.9 L235.3 83.9 L238.2 86.0 L241.2 88.0 L244.1 90.0 L247.0 92.0 L249.9 94.1 L252.9 96.1 L255.8 98.2 L258.7 100.3 L261.7 102.4 L264.6 104.4 L267.5 106.5 L270.4 108.6 L273.4 110.8 L276.3 112.9 L279.2 115.0 L282.2 117.1 L285.1 119.2 L288.0 121.4 L290.9 123.5 L293.9 125.7 L296.8 127.8 L299.7 130.0 L302.6 132.1 L305.6 134.3 L308.5 136.4 L311.4 138.6 L314.3 140.8 L317.3 142.9 L320.2 145.1 L323.1 147.3 L326.0 149.5 L328.9 151.6 L331.8 153.8 L334.7 156.0 L337.7 158.1 L340.6 160.3 L343.5 162.5 L346.4 164.7 L349.3 166.8 L352.2 169.0 L355.0 171.2 L357.9 173.4 L360.8 175.5 L363.7 177.7 L366.6 179.8 L369.4 182.0 L372.3 184.2 L375.1 186.3 L378.0 188.5 L380.8 190.6 L383.7 192.8 L386.5 194.9 L389.3 197.1 L392.1 199.2 L394.9 201.3 L397.7 203.4 L400.5 205.5 L403.3 207.6 L406.0 209.7 L408.8 211.8 L411.5 213.9 L414.3 216.0 L417.0 218.0 L419.7 220.1 L422.4 222.1 L425.1 224.2 L427.8 226.2 L430.5 228.2 L433.1 230.2 L435.8 232.2 L438.4 234.2 L441.0 236.2 L443.6 238.2 L446.2 240.1 L448.7 242.1 L451.3 244.0 L453.8 245.9 L456.3 247.8 L458.8 249.7 L461.3 251.6 L463.8 253.4 L466.2 255.3 L468.7 257.1 L471.0 258.9 L473.4 260.7 L475.8 262.5 L478.1 264.3 L480.4 266.0 L482.7 267.8 L485.0 269.5 L487.3 271.2 L489.5 272.9 L491.7 274.6 L493.8 276.2 L495.9 277.8 L498.0 279.3 L500.0 280.9 L502.0 282.4 L504.0 283.9 L506.0 285.4 L507.9 286.8 L509.8 288.3 L511.7 289.7 L513.5 291.1 L515.4 292.5 L517.2 293.9 L519.0 295.3 L520.8 296.6 L522.6 298.0 L524.3 299.3 L526.0 300.5 L527.7 301.8 L529.3 303.0 L530.9 304.3 L532.5 305.4 L534.0 306.6 L535.5 307.7 L537.0 308.8 L538.4 309.9 L539.8 311.0 L541.2 312.0 L542.6 313.1 L543.9 314.1 L545.3 315.1 L546.5 316.1 L547.8 317.0 L549.0 317.9 L550.3 318.9 L551.4 319.7 L552.6 320.6 L553.7 321.5 L554.8 322.3 L555.9 323.1 L557.0 324.0 L558.0 324.7 L559.0 325.5 L560.0 326.3 L561.0 327.0 L561.9 327.7 L562.8 328.4 L563.7 329.1 L564.6 329.8 L565.5 330.4 L566.3 331.1 L567.2 331.7 L568.0 332.3 L568.8 332.9 L569.5 333.5 L570.3 334.0 L571.0 334.6 L571.7 335.1 L572.4 335.7 L573.1 336.2 L573.8 336.7 L574.5 337.2 L575.1 337.7 L575.7 338.1 L576.3 338.6 L576.9 339.1 L577.5 339.5 L578.1 339.9 L578.7 340.4 L579.2 340.8 L579.8 341.2 L580.3 341.6 L580.9 342.0 L581.4 342.4 L581.9 342.8 L582.4 343.2 L582.9 343.6 L583.4 343.9 L583.9 344.3 L584.3 344.7 L584.8 345.0 L585.2 345.4 L585.7 345.7 L586.1 346.0 L586.5 346.3 L586.9 346.6 L587.4 347.0 L587.7 347.3 L588.1 347.6 L588.5 347.8 L588.9 348.1 L589.3 348.4 L589.6 348.7 L590.0 348.9 L590.3 349.2 L590.6 349.4 L591.0 349.7 L591.3 349.9 L591.6 350.2 L591.9 350.4 L592.2 350.6 L592.4 350.8 L592.7 351.0 L593.0 351.2 L593.2 351.4 L593.5 351.6 L593.7 351.8 L593.9 351.9 L594.2 352.1 L594.4 352.3 L594.6 352.4 L594.8 352.6 L595.0 352.7 L595.2 352.9 L595.4 353.0 L595.6 353.2 L595.8 353.3 L595.9 353.5 L596.1 353.6 L596.3 353.7 L596.5 353.8 L596.6 354.0 L596.8 354.1 L596.9 354.2 L597.0 354.3 L597.2 354.4 L597.3 354.5 L597.4 354.6 L597.6 354.7 L597.7 354.8 L597.8 354.9 L598.0 355.0 L598.2 355.2 L598.3 355.3 L598.5 355.4 L598.7 355.5 L598.9 355.7 L599.0 355.8 L599.2 355.9 L599.4 356.1 L599.5 356.2 L599.6 356.3 L599.8 356.4 L599.9 356.5 L600.0 356.6 L600.1 356.6 L600.2 356.7 L600.3 356.8 L600.5 356.9 L600.6 357.0 L600.7 357.1 L600.8 357.1 L600.9 357.2 L601.0 357.3 L601.1 357.4 L601.3 357.5 L601.4 357.6 L601.5 357.7 L601.6 357.7 L601.6 357.8 L601.7 357.8Z');background:linear-gradient(180deg,rgba(0,153,0,1) 0%,rgba(0,153,0,0) 45%),conic-gradient(from -3.5deg at 256px 318.6px,#009900 0deg,#999900 41.8deg,#990000 93.3deg,#990099 179.9deg,#000099 222deg,#009999 273.5deg,#009900 360deg)"></div>
<div class="a" style="left:1151px;top:147px;width:690px;height:523px;clip-path:polygon(524.2px 317.6px,245.7px 149.5px,122.8px 485.6px);background:radial-gradient(circle at 256px 318.6px,#fff 0,rgba(255,255,255,0.85) 15px,rgba(255,255,255,0) 80px),conic-gradient(from -3.5deg at 256px 318.6px,#00ff00 0deg,#ffff00 41.8deg,#ff0000 93.3deg,#ff00ff 179.9deg,#0000ff 222deg,#00ffff 273.5deg,#00ff00 360deg)"></div>
<div class="a" style="left:1601px;top:155px;width:232px;height:195px;background:linear-gradient(146.6deg,#6a9a00 0%,#9a9a00 30%,#9a7000 100%)"></div>
<div class="a" style="left:1601px;top:155px;width:232px;height:195px;clip-path:polygon(0 20px,232px 174px,232px 195px,0 195px);background:linear-gradient(56deg,#c0ff00 0%,#ffff00 45%,#ffb000 100%)"></div>
<canvas id="cie" class="a" style="left:1151px;top:147px" width="690" height="523"></canvas>
<canvas id="ins" class="a" style="left:1601px;top:155px" width="232" height="195"></canvas>
<svg class="a" style="left:0;top:0" width="1920" height="1039" viewBox="0 0 1920 1039">
<path d="M1150.5 146.5H1841.5V670.5" fill="none" stroke="#a4a4a4" stroke-width="1.8"/>
<path d="M1150.5 146V670.5H1841.5" fill="none" stroke="#a4a4a4" stroke-width="1.8"/>
<path d="M1144.5 670.0H1150.5" stroke="#a4a4a4" stroke-width="1.6"/>
<text x="1145" y="675.5" font-size="15.5" fill="#d2d2d2" text-anchor="end">0</text>
<path d="M1151.0 670.5V676.5" stroke="#a4a4a4" stroke-width="1.6"/>
<text x="1151.0" y="693" font-size="15.5" fill="#d2d2d2" text-anchor="middle">0</text>
<path d="M1144.5 607.8H1150.5" stroke="#a4a4a4" stroke-width="1.6"/>
<text x="1145" y="613.2" font-size="15.5" fill="#d2d2d2" text-anchor="end">0,1</text>
<path d="M1232.9 670.5V676.5" stroke="#a4a4a4" stroke-width="1.6"/>
<text x="1232.9" y="693" font-size="15.5" fill="#d2d2d2" text-anchor="middle">0,1</text>
<path d="M1144.5 545.5H1150.5" stroke="#a4a4a4" stroke-width="1.6"/>
<text x="1145" y="551.0" font-size="15.5" fill="#d2d2d2" text-anchor="end">0,2</text>
<path d="M1314.8 670.5V676.5" stroke="#a4a4a4" stroke-width="1.6"/>
<text x="1314.8" y="693" font-size="15.5" fill="#d2d2d2" text-anchor="middle">0,2</text>
<path d="M1144.5 483.2H1150.5" stroke="#a4a4a4" stroke-width="1.6"/>
<text x="1145" y="488.8" font-size="15.5" fill="#d2d2d2" text-anchor="end">0,3</text>
<path d="M1396.7 670.5V676.5" stroke="#a4a4a4" stroke-width="1.6"/>
<text x="1396.7" y="693" font-size="15.5" fill="#d2d2d2" text-anchor="middle">0,3</text>
<path d="M1144.5 421.0H1150.5" stroke="#a4a4a4" stroke-width="1.6"/>
<text x="1145" y="426.5" font-size="15.5" fill="#d2d2d2" text-anchor="end">0,4</text>
<path d="M1478.6 670.5V676.5" stroke="#a4a4a4" stroke-width="1.6"/>
<text x="1478.6" y="693" font-size="15.5" fill="#d2d2d2" text-anchor="middle">0,4</text>
<path d="M1144.5 358.8H1150.5" stroke="#a4a4a4" stroke-width="1.6"/>
<text x="1145" y="364.2" font-size="15.5" fill="#d2d2d2" text-anchor="end">0,5</text>
<path d="M1560.5 670.5V676.5" stroke="#a4a4a4" stroke-width="1.6"/>
<text x="1560.5" y="693" font-size="15.5" fill="#d2d2d2" text-anchor="middle">0,5</text>
<path d="M1144.5 296.5H1150.5" stroke="#a4a4a4" stroke-width="1.6"/>
<text x="1145" y="302.0" font-size="15.5" fill="#d2d2d2" text-anchor="end">0,6</text>
<path d="M1642.4 670.5V676.5" stroke="#a4a4a4" stroke-width="1.6"/>
<text x="1642.4" y="693" font-size="15.5" fill="#d2d2d2" text-anchor="middle">0,6</text>
<path d="M1144.5 234.2H1150.5" stroke="#a4a4a4" stroke-width="1.6"/>
<text x="1145" y="239.8" font-size="15.5" fill="#d2d2d2" text-anchor="end">0,7</text>
<path d="M1724.3 670.5V676.5" stroke="#a4a4a4" stroke-width="1.6"/>
<text x="1724.3" y="693" font-size="15.5" fill="#d2d2d2" text-anchor="middle">0,7</text>
<path d="M1144.5 172.0H1150.5" stroke="#a4a4a4" stroke-width="1.6"/>
<text x="1145" y="177.5" font-size="15.5" fill="#d2d2d2" text-anchor="end">0,8</text>
<path d="M1806.2 670.5V676.5" stroke="#a4a4a4" stroke-width="1.6"/>
<text x="1806.2" y="693" font-size="15.5" fill="#d2d2d2" text-anchor="middle">0,8</text>
<rect x="1600.5" y="153.5" width="233" height="197" fill="none" stroke="#9a9a9a" stroke-width="2"/>
<rect x="1388.9" y="288.5" width="14" height="14" fill="none" stroke="#f2f2f2" stroke-opacity="0.9" stroke-width="2"/>
<rect x="1392.0" y="324.5" width="14" height="14" fill="none" stroke="#f2f2f2" stroke-opacity="0.9" stroke-width="2"/>
<rect x="1393.4" y="358.0" width="14" height="14" fill="none" stroke="#f2f2f2" stroke-opacity="0.9" stroke-width="2"/>
<rect x="1395.9" y="389.5" width="14" height="14" fill="none" stroke="#f2f2f2" stroke-opacity="0.9" stroke-width="2"/>
<rect x="1397.6" y="423.2" width="14" height="14" fill="none" stroke="#f2f2f2" stroke-opacity="0.9" stroke-width="2"/>
<rect x="1327.6" y="458.3" width="14" height="14" fill="none" stroke="#f2f2f2" stroke-opacity="0.9" stroke-width="2"/>
<rect x="1342.4" y="458.3" width="14" height="14" fill="none" stroke="#f2f2f2" stroke-opacity="0.9" stroke-width="2"/>
<rect x="1356.7" y="458.3" width="14" height="14" fill="none" stroke="#f2f2f2" stroke-opacity="0.9" stroke-width="2"/>
<rect x="1370.7" y="458.3" width="14" height="14" fill="none" stroke="#f2f2f2" stroke-opacity="0.9" stroke-width="2"/>
<rect x="1384.1" y="458.3" width="14" height="14" fill="none" stroke="#f2f2f2" stroke-opacity="0.9" stroke-width="2"/>
<rect x="1265.8" y="624.5" width="14" height="14" fill="none" stroke="#f2f2f2" stroke-opacity="0.9" stroke-width="2"/>
<rect x="1294.7" y="588.2" width="14" height="14" fill="none" stroke="#f2f2f2" stroke-opacity="0.9" stroke-width="2"/>
<rect x="1320.8" y="556.6" width="14" height="14" fill="none" stroke="#f2f2f2" stroke-opacity="0.9" stroke-width="2"/>
<rect x="1346.7" y="524.8" width="14" height="14" fill="none" stroke="#f2f2f2" stroke-opacity="0.9" stroke-width="2"/>
<rect x="1372.8" y="491.7" width="14" height="14" fill="none" stroke="#f2f2f2" stroke-opacity="0.9" stroke-width="2"/>
<rect x="1406.0" y="567.1" width="14" height="14" fill="none" stroke="#f2f2f2" stroke-opacity="0.9" stroke-width="2"/>
<rect x="1404.6" y="543.7" width="14" height="14" fill="none" stroke="#f2f2f2" stroke-opacity="0.9" stroke-width="2"/>
<rect x="1403.3" y="521.6" width="14" height="14" fill="none" stroke="#f2f2f2" stroke-opacity="0.9" stroke-width="2"/>
<rect x="1403.3" y="502.7" width="14" height="14" fill="none" stroke="#f2f2f2" stroke-opacity="0.9" stroke-width="2"/>
<rect x="1401.9" y="479.0" width="14" height="14" fill="none" stroke="#f2f2f2" stroke-opacity="0.9" stroke-width="2"/>
<rect x="1668.1" y="456.8" width="14" height="14" fill="none" stroke="#f2f2f2" stroke-opacity="0.9" stroke-width="2"/>
<rect x="1608.7" y="456.8" width="14" height="14" fill="none" stroke="#f2f2f2" stroke-opacity="0.9" stroke-width="2"/>
<rect x="1556.9" y="456.8" width="14" height="14" fill="none" stroke="#f2f2f2" stroke-opacity="0.9" stroke-width="2"/>
<rect x="1507.8" y="456.8" width="14" height="14" fill="none" stroke="#f2f2f2" stroke-opacity="0.9" stroke-width="2"/>
<rect x="1453.0" y="456.8" width="14" height="14" fill="none" stroke="#f2f2f2" stroke-opacity="0.9" stroke-width="2"/>
<rect x="1487.6" y="347.7" width="14" height="14" fill="none" stroke="#f2f2f2" stroke-opacity="0.9" stroke-width="2"/>
<rect x="1469.2" y="371.5" width="14" height="14" fill="none" stroke="#f2f2f2" stroke-opacity="0.9" stroke-width="2"/>
<rect x="1453.0" y="391.3" width="14" height="14" fill="none" stroke="#f2f2f2" stroke-opacity="0.9" stroke-width="2"/>
<rect x="1435.2" y="412.1" width="14" height="14" fill="none" stroke="#f2f2f2" stroke-opacity="0.9" stroke-width="2"/>
<rect x="1417.7" y="435.8" width="14" height="14" fill="none" stroke="#f2f2f2" stroke-opacity="0.9" stroke-width="2"/>
<rect x="1399.8" y="458.3" width="14" height="14" fill="none" stroke="#000" stroke-width="2.2"/>
<circle cx="1395.9" cy="285.2" r="4.6" fill="#3c9a3c" stroke="#1a1a1a" stroke-width="1.5"/>
<circle cx="1397.3" cy="326.2" r="4.6" fill="#6aa46a" stroke="#1a1a1a" stroke-width="1.5"/>
<circle cx="1401.5" cy="359.4" r="4.6" fill="#80a880" stroke="#1a1a1a" stroke-width="1.5"/>
<circle cx="1404.6" cy="392.9" r="4.6" fill="#8cac8c" stroke="#1a1a1a" stroke-width="1.5"/>
<circle cx="1404.9" cy="431.6" r="4.6" fill="#98ac98" stroke="#1a1a1a" stroke-width="1.5"/>
<circle cx="1332.1" cy="470.4" r="4.6" fill="#30aaa4" stroke="#1a1a1a" stroke-width="1.5"/>
<circle cx="1346.7" cy="469.3" r="4.6" fill="#5cb0aa" stroke="#1a1a1a" stroke-width="1.5"/>
<circle cx="1361.2" cy="469.3" r="4.6" fill="#7ab2ac" stroke="#1a1a1a" stroke-width="1.5"/>
<circle cx="1377.1" cy="469.3" r="4.6" fill="#90b4ae" stroke="#1a1a1a" stroke-width="1.5"/>
<circle cx="1390.1" cy="469.3" r="4.6" fill="#a0b6b0" stroke="#1a1a1a" stroke-width="1.5"/>
<circle cx="1274.2" cy="638.8" r="4.6" fill="#2424b4" stroke="#1a1a1a" stroke-width="1.5"/>
<circle cx="1300.3" cy="604.0" r="4.6" fill="#5656b4" stroke="#1a1a1a" stroke-width="1.5"/>
<circle cx="1326.5" cy="572.2" r="4.6" fill="#7070b4" stroke="#1a1a1a" stroke-width="1.5"/>
<circle cx="1352.3" cy="540.5" r="4.6" fill="#8686b8" stroke="#1a1a1a" stroke-width="1.5"/>
<circle cx="1378.5" cy="504.3" r="4.6" fill="#9898bc" stroke="#1a1a1a" stroke-width="1.5"/>
<circle cx="1413.0" cy="577.6" r="4.6" fill="#b424b4" stroke="#1a1a1a" stroke-width="1.5"/>
<circle cx="1411.6" cy="556.1" r="4.6" fill="#b45cb4" stroke="#1a1a1a" stroke-width="1.5"/>
<circle cx="1410.3" cy="534.5" r="4.6" fill="#bc7cbc" stroke="#1a1a1a" stroke-width="1.5"/>
<circle cx="1408.9" cy="515.7" r="4.6" fill="#c092c0" stroke="#1a1a1a" stroke-width="1.5"/>
<circle cx="1407.6" cy="492.2" r="4.6" fill="#c0a4c0" stroke="#1a1a1a" stroke-width="1.5"/>
<circle cx="1671.5" cy="463.8" r="4.6" fill="#b41c1c" stroke="#1a1a1a" stroke-width="1.5"/>
<circle cx="1616.7" cy="463.8" r="4.6" fill="#c04848" stroke="#1a1a1a" stroke-width="1.5"/>
<circle cx="1566.8" cy="465.2" r="4.6" fill="#c46868" stroke="#1a1a1a" stroke-width="1.5"/>
<circle cx="1522.1" cy="465.6" r="4.6" fill="#c48484" stroke="#1a1a1a" stroke-width="1.5"/>
<circle cx="1463.9" cy="465.6" r="4.6" fill="#c09a9a" stroke="#1a1a1a" stroke-width="1.5"/>
<circle cx="1497.0" cy="350.8" r="4.6" fill="#c2ba2a" stroke="#1a1a1a" stroke-width="1.5"/>
<circle cx="1478.4" cy="375.1" r="4.6" fill="#c0ba60" stroke="#1a1a1a" stroke-width="1.5"/>
<circle cx="1463.9" cy="393.9" r="4.6" fill="#c0bc7c" stroke="#1a1a1a" stroke-width="1.5"/>
<circle cx="1446.7" cy="417.5" r="4.6" fill="#bebc90" stroke="#1a1a1a" stroke-width="1.5"/>
<circle cx="1426.3" cy="443.4" r="4.6" fill="#bcbca4" stroke="#1a1a1a" stroke-width="1.5"/>
<circle cx="1406.2" cy="468" r="4.6" fill="#fff" stroke="#1a1a1a" stroke-width="1.5"/>
<rect x="1709" y="244.2" width="14" height="14" fill="none" stroke="#f4f4f4" stroke-width="2.2"/>
<circle cx="1735.9" cy="225.3" r="4.8" fill="#b8b418" stroke="#1a1a1a" stroke-width="1.6"/>
<text x="91" y="771" font-size="32" fill="#f4f4f4" letter-spacing="-0.1">Current Reading</text>
<text x="91" y="816.0" font-size="27.5" fill="#f4f4f4">x: 0,4234</text>
<text x="91" y="859.3" font-size="27.5" fill="#f4f4f4">y: 0,5117</text>
<text x="91" y="902.6" font-size="27.5" fill="#f4f4f4">fL: 50,12</text>
<text x="91" y="945.9" font-size="27.5" fill="#f4f4f4">cd/m&#178;: 171,73</text>
<rect x="452.9" y="749.7" width="268.6" height="191.6" fill="#242424"/>
<path d="M452.9 797.6H721.5" stroke="#a4a4a4" stroke-width="1.6"/>
<path d="M452.9 845.5H721.5" stroke="#a4a4a4" stroke-width="1.6"/>
<path d="M452.9 893.4H721.5" stroke="#a4a4a4" stroke-width="1.6"/>
<path d="M452.9 749.7H721.5V947.3" fill="none" stroke="#a4a4a4" stroke-width="1.6"/>
<path d="M452.9 748.9000000000001V947.3M452.9 941.3H721.5" fill="none" stroke="#a4a4a4" stroke-width="1.8"/>
<path d="M446.9 749.7H452.9" stroke="#a4a4a4" stroke-width="1.6"/>
<text x="447.9" y="755.2" font-size="15.5" fill="#d2d2d2" text-anchor="end">40</text>
<path d="M446.9 797.6H452.9" stroke="#a4a4a4" stroke-width="1.6"/>
<text x="447.9" y="803.1" font-size="15.5" fill="#d2d2d2" text-anchor="end">20</text>
<path d="M446.9 845.5H452.9" stroke="#a4a4a4" stroke-width="1.6"/>
<text x="447.9" y="851.0" font-size="15.5" fill="#d2d2d2" text-anchor="end">0</text>
<path d="M446.9 893.4H452.9" stroke="#a4a4a4" stroke-width="1.6"/>
<text x="447.9" y="898.9" font-size="15.5" fill="#d2d2d2" text-anchor="end">-20</text>
<path d="M446.9 941.3H452.9" stroke="#a4a4a4" stroke-width="1.6"/>
<text x="447.9" y="946.8" font-size="15.5" fill="#d2d2d2" text-anchor="end">-40</text>
<text x="572" y="743" font-size="15" fill="#d2d2d2" text-anchor="middle">RGB Balance</text>
<text x="587" y="959" font-size="15" fill="#d2d2d2" text-anchor="middle">100%</text>
<path d="M478 845.5H549M551 845.5H621" stroke="#151515" stroke-width="1.4"/>
<rect x="625.2" y="845.5" width="70.8" height="74.5" fill="url(#barB)" stroke="#000" stroke-width="1.4"/>
<rect x="745" y="724.4" width="768" height="16.8" fill="#2d2d2d"/>
<rect x="745" y="741.2" width="768" height="15.3" fill="#141414"/>
<rect x="745" y="724.4" width="21" height="32.1" fill="#000"/>
<rect x="766" y="756.5" width="747" height="30.45" fill="#3d3d3d"/>
<rect x="745" y="756.5" width="21" height="30.45" fill="#262626"/>
<text transform="translate(772 779.5) scale(1.1 1)" font-size="20" fill="#f6f6f6" letter-spacing="0.45">x: CIE31</text>
<text transform="translate(941.9 779.5) scale(1.2 1)" font-size="20" fill="#f6f6f6">0,3360</text>
<text transform="translate(1056.9 779.5) scale(1.2 1)" font-size="20" fill="#f6f6f6">0,3605</text>
<text transform="translate(1172.7 779.5) scale(1.2 1)" font-size="20" fill="#f6f6f6">0,3817</text>
<text transform="translate(1288.1 779.5) scale(1.2 1)" font-size="20" fill="#f6f6f6">0,4004</text>
<text transform="translate(1403.4 779.5) scale(1.2 1)" font-size="20" fill="#f6f6f6">0,4234</text>
<rect x="766" y="787.0" width="747" height="30.45" fill="#7b7b7b"/>
<rect x="745" y="787.0" width="21" height="30.45" fill="#262626"/>
<text transform="translate(772 810.0) scale(1.1 1)" font-size="20" fill="#f6f6f6" letter-spacing="0.45">y: CIE31</text>
<text transform="translate(941.9 810.0) scale(1.2 1)" font-size="20" fill="#f6f6f6">0,3630</text>
<text transform="translate(1056.9 810.0) scale(1.2 1)" font-size="20" fill="#f6f6f6">0,4048</text>
<text transform="translate(1172.7 810.0) scale(1.2 1)" font-size="20" fill="#f6f6f6">0,4407</text>
<text transform="translate(1288.1 810.0) scale(1.2 1)" font-size="20" fill="#f6f6f6">0,4725</text>
<text transform="translate(1403.4 810.0) scale(1.2 1)" font-size="20" fill="#f6f6f6">0,5117</text>
<rect x="766" y="817.4" width="747" height="30.45" fill="#3d3d3d"/>
<rect x="745" y="817.4" width="21" height="30.45" fill="#262626"/>
<text transform="translate(772 840.4) scale(1.1 1)" font-size="20" fill="#f6f6f6" letter-spacing="0.45">Y</text>
<text transform="translate(941.9 840.4) scale(1.2 1)" font-size="20" fill="#f6f6f6">179,9046</text>
<text transform="translate(1056.9 840.4) scale(1.2 1)" font-size="20" fill="#f6f6f6">176,9678</text>
<text transform="translate(1172.7 840.4) scale(1.2 1)" font-size="20" fill="#f6f6f6">174,9916</text>
<text transform="translate(1288.1 840.4) scale(1.2 1)" font-size="20" fill="#f6f6f6">173,4696</text>
<text transform="translate(1403.4 840.4) scale(1.2 1)" font-size="20" fill="#f6f6f6">171,7319</text>
<rect x="766" y="847.9" width="747" height="30.45" fill="#7b7b7b"/>
<rect x="745" y="847.9" width="21" height="30.45" fill="#262626"/>
<text transform="translate(772 870.9) scale(1.1 1)" font-size="20" fill="#f6f6f6" letter-spacing="0.45">Target x:CIE31</text>
<text transform="translate(941.9 870.9) scale(1.2 1)" font-size="20" fill="#f6f6f6">0,3344</text>
<text transform="translate(1056.9 870.9) scale(1.2 1)" font-size="20" fill="#f6f6f6">0,3564</text>
<text transform="translate(1172.7 870.9) scale(1.2 1)" font-size="20" fill="#f6f6f6">0,3773</text>
<text transform="translate(1288.1 870.9) scale(1.2 1)" font-size="20" fill="#f6f6f6">0,3969</text>
<text transform="translate(1403.4 870.9) scale(1.2 1)" font-size="20" fill="#f6f6f6">0,4193</text>
<rect x="766" y="878.3" width="747" height="30.45" fill="#3d3d3d"/>
<rect x="745" y="878.3" width="21" height="30.45" fill="#262626"/>
<text transform="translate(772 901.3) scale(1.1 1)" font-size="20" fill="#f6f6f6" letter-spacing="0.45">Target y:CIE31</text>
<text transform="translate(941.9 901.3) scale(1.2 1)" font-size="20" fill="#f6f6f6">0,3648</text>
<text transform="translate(1056.9 901.3) scale(1.2 1)" font-size="20" fill="#f6f6f6">0,4013</text>
<text transform="translate(1172.7 901.3) scale(1.2 1)" font-size="20" fill="#f6f6f6">0,4358</text>
<text transform="translate(1288.1 901.3) scale(1.2 1)" font-size="20" fill="#f6f6f6">0,4682</text>
<text transform="translate(1403.4 901.3) scale(1.2 1)" font-size="20" fill="#f6f6f6">0,5053</text>
<rect x="766" y="908.8" width="747" height="30.45" fill="#7b7b7b"/>
<rect x="745" y="908.8" width="21" height="30.45" fill="#262626"/>
<text transform="translate(772 931.8) scale(1.1 1)" font-size="20" fill="#f6f6f6" letter-spacing="0.45">Target Y</text>
<text transform="translate(941.9 931.8) scale(1.2 1)" font-size="20" fill="#f6f6f6">181,3415</text>
<text transform="translate(1056.9 931.8) scale(1.2 1)" font-size="20" fill="#f6f6f6">178,1584</text>
<text transform="translate(1172.7 931.8) scale(1.2 1)" font-size="20" fill="#f6f6f6">175,7127</text>
<text transform="translate(1288.1 931.8) scale(1.2 1)" font-size="20" fill="#f6f6f6">173,7933</text>
<text transform="translate(1403.4 931.8) scale(1.2 1)" font-size="20" fill="#f6f6f6">171,9376</text>
<text transform="translate(942.3 747.6) scale(1.2 1)" font-size="17.5" font-weight="bold" fill="#f6f6f6">20%</text>
<text transform="translate(1057.3 747.6) scale(1.2 1)" font-size="17.5" font-weight="bold" fill="#f6f6f6">40%</text>
<text transform="translate(1173.1 747.6) scale(1.2 1)" font-size="17.5" font-weight="bold" fill="#f6f6f6">60%</text>
<text transform="translate(1288.5 747.6) scale(1.2 1)" font-size="17.5" font-weight="bold" fill="#f6f6f6">80%</text>
<text transform="translate(1403.8 747.6) scale(1.2 1)" font-size="17.5" font-weight="bold" fill="#f6f6f6">100%</text>
<defs>
<linearGradient id="bbtn" x1="0" x2="0" y1="0" y2="1"><stop offset="0" stop-color="#a9a9a9"/><stop offset="0.55" stop-color="#8a8a8a"/><stop offset="1" stop-color="#5e5e5e"/></linearGradient>
<linearGradient id="bsel" x1="0" x2="0" y1="0" y2="1"><stop offset="0" stop-color="#1c1c1c"/><stop offset="0.3" stop-color="#2a2a2a"/><stop offset="1" stop-color="#303030"/></linearGradient>
<linearGradient id="bmid" x1="0" x2="0" y1="0" y2="1"><stop offset="0" stop-color="#4a4a4a"/><stop offset="0.5" stop-color="#353535"/><stop offset="1" stop-color="#262626"/></linearGradient>
<radialGradient id="bcirc" cx="0.5" cy="0.25" r="0.8"><stop offset="0" stop-color="#707070"/><stop offset="1" stop-color="#b0b0b0"/></radialGradient>
</defs>
<rect x="915" y="968" width="648" height="71" fill="url(#bmid)"/>
<rect x="1.5" y="969" width="50" height="68.5" rx="4" fill="url(#bbtn)" stroke="#6a6a6a" stroke-width="1"/>
<circle cx="26.7" cy="979.5" r="8" fill="url(#bcirc)"/><path d="M21.5 982.5H32L26.7 976.5Z" fill="#222"/>
<rect x="7" y="998.5" width="39.5" height="33.5" rx="4" fill="#ffff00" stroke="#b0b000" stroke-width="1.2"/>
<rect x="59" y="969" width="169.5" height="68.5" rx="4" fill="url(#bbtn)" stroke="#6a6a6a" stroke-width="1"/>
<rect x="65" y="975.3" width="158" height="40" rx="4" fill="#c3c2a4" stroke="#8a8a6a" stroke-width="1.3"/>
<text x="144" y="1033" font-size="12" font-weight="bold" fill="#2a2a2a" text-anchor="middle">20%</text>
<rect x="230.5" y="969" width="169.5" height="68.5" rx="4" fill="url(#bbtn)" stroke="#6a6a6a" stroke-width="1"/>
<rect x="236.5" y="975.3" width="158" height="40" rx="4" fill="#c4c28a" stroke="#8a8a6a" stroke-width="1.3"/>
<text x="315.5" y="1033" font-size="12" font-weight="bold" fill="#2a2a2a" text-anchor="middle">40%</text>
<rect x="402" y="969" width="169.5" height="68.5" rx="4" fill="url(#bbtn)" stroke="#6a6a6a" stroke-width="1"/>
<rect x="408" y="975.3" width="158" height="40" rx="4" fill="#c4c172" stroke="#8a8a6a" stroke-width="1.3"/>
<text x="487" y="1033" font-size="12" font-weight="bold" fill="#2a2a2a" text-anchor="middle">60%</text>
<rect x="573.5" y="969" width="169.5" height="68.5" rx="4" fill="url(#bbtn)" stroke="#6a6a6a" stroke-width="1"/>
<rect x="579.5" y="975.3" width="158" height="40" rx="4" fill="#c3c052" stroke="#8a8a6a" stroke-width="1.3"/>
<text x="658.5" y="1033" font-size="12" font-weight="bold" fill="#2a2a2a" text-anchor="middle">80%</text>
<rect x="745.4" y="969" width="169.8" height="69" rx="4" fill="url(#bsel)"/>
<rect x="751.3" y="974.2" width="158.3" height="41.6" rx="5" fill="#c4c000" stroke="#5a5800" stroke-width="1.2"/>
<text x="830.3" y="1033" font-size="12" font-weight="bold" fill="#fff" text-anchor="middle">100%</text>
<rect x="1563.4" y="969" width="54" height="69" rx="4" fill="url(#bbtn)" stroke="#5a5a5a" stroke-width="1"/>
<path d="M1564 989.5H1617" stroke="#555" stroke-width="1.2"/>
<circle cx="1590.3" cy="979" r="8" fill="url(#bcirc)"/><path d="M1585 981.5H1595.5L1590.3 976Z" fill="#222"/>
<rect x="1574" y="997.5" width="33" height="33" rx="4" fill="#b4b4b4" stroke="#1a1a1a" stroke-width="2.4"/>
<rect x="1583" y="1006.5" width="15" height="15" fill="#000"/>
<rect x="1619.2" y="969" width="50.4" height="33.6" fill="url(#bbtn)"/>
<circle cx="1644.9" cy="985.7" r="11" fill="url(#bcirc)"/>
<rect x="1670.6" y="969" width="50.1" height="33.6" fill="url(#bbtn)"/>
<circle cx="1696.2" cy="985.7" r="11" fill="url(#bcirc)"/>
<rect x="1721.7" y="969" width="49.9" height="33.6" fill="url(#bbtn)"/>
<circle cx="1747.2" cy="985.7" r="11" fill="url(#bcirc)"/>
<rect x="1772.6" y="969" width="49.8" height="33.6" fill="url(#bbtn)"/>
<circle cx="1798.0" cy="985.7" r="11" fill="url(#bcirc)"/>
<rect x="1823.4" y="969" width="49.6" height="33.6" fill="url(#bbtn)"/>
<circle cx="1848.7" cy="985.7" r="11" fill="url(#bcirc)"/>
<rect x="1640.9" y="981.7" width="8" height="8" fill="#222"/>
<path d="M1692.7 980.5L1701.2 985.7L1692.7 991Z" fill="#222"/>
<text x="1747.2" y="990.5" font-size="12" font-weight="bold" fill="#222" text-anchor="middle">[··]</text>
<text x="1798.0" y="991" font-size="17" font-weight="bold" fill="#222" text-anchor="middle">&#8734;</text>
<path d="M1843.7 984A5.5 5.5 0 0 1 1853.2 982.5M1853.7 987.5A5.5 5.5 0 0 1 1844.2 989" fill="none" stroke="#222" stroke-width="2.2"/>
<path d="M1849.7 980L1854.7 980.5L1853.7 985Z M1847.7 991.5L1842.7 991L1843.7 986.5Z" fill="#222"/>
<rect x="1875" y="969" width="45" height="34" fill="#262626"/>
<circle cx="1901.2" cy="985.7" r="11" fill="#323232"/>
<rect x="1619.2" y="1004" width="152.4" height="33.5" rx="3" fill="url(#bbtn)"/>
<rect x="1773.6" y="1004" width="150" height="33.5" rx="3" fill="url(#bbtn)"/>
<circle cx="1653.8" cy="1021" r="11" fill="url(#bcirc)"/><text x="1653.8" y="1028" font-size="20" fill="#333" text-anchor="middle">&#171;</text>
<circle cx="1894.3" cy="1021" r="11" fill="url(#bcirc)"/><text x="1894.3" y="1028" font-size="20" fill="#333" text-anchor="middle">&#187;</text>
<text transform="translate(1682.5 1030.5) scale(0.92 1)" font-size="26.5" font-weight="bold" fill="#3a3a3a">Back</text>
<text transform="translate(1802.5 1030.5) scale(1.03 1)" font-size="26.5" font-weight="bold" fill="#3a3a3a">Next</text>
</svg>

<script>
(function(){
function col(x,y,o,i){
  if(y<=0.001){y=0.001;}
  var X=x/y, Z=(1-x-y)/y;
  var r=3.2406*X-1.5372-0.4986*Z, g=-0.9689*X+1.8758+0.0415*Z, b=0.0557*X-0.2040+1.0570*Z;
  var out=(r<0||g<0||b<0);
  if(r<0)r=0; if(g<0)g=0; if(b<0)b=0;
  var m=Math.max(r,g,b); if(m<=0)m=1;
  r=Math.pow(r/m,1.0); g=Math.pow(g/m,1.0); b=Math.pow(b/m,1.0);
  var f=out?0.6:1.0;
  o[i]=r*255*f; o[i+1]=g*255*f; o[i+2]=b*255*f; o[i+3]=255;
}
var c=document.getElementById('cie');
if(c&&c.getContext){
  var W=c.width,H=c.height;
  var off=document.createElement('canvas'); off.width=W; off.height=H;
  var oc=off.getContext('2d'); var im=oc.createImageData(W,H); var d=im.data;
  var t4=[0,0,0,0];
  for(var py=0;py<H;py++){
    for(var px=0;px<W;px++){ var R=0,G=0,B=0;
      for(var sy=0;sy<2;sy++) for(var sx=0;sx<2;sx++){
        var yy=(670-(147+py+0.25+0.5*sy))/622.5, xx=(px+0.25+0.5*sx)/819; col(xx,yy,t4,0); R+=t4[0];G+=t4[1];B+=t4[2]; }
      var i=(py*W+px)*4; d[i]=R/4; d[i+1]=G/4; d[i+2]=B/4; d[i+3]=255; } }
  oc.putImageData(im,0,0);
  var ctx=c.getContext('2d');
  var P=[142.60,519.91,142.59,519.91,142.59,519.91,142.58,519.91,142.57,519.91,142.57,519.90,142.56,519.90,142.55,519.90,142.54,519.90,142.53,519.90,142.51,519.90,142.50,519.90,142.49,519.90,142.47,519.91,142.45,519.91,142.44,519.92,142.42,519.92,142.40,519.93,142.38,519.93,142.36,519.93,142.34,519.94,142.32,519.94,142.30,519.94,142.28,519.94,142.26,519.94,142.24,519.93,142.22,519.93,142.20,519.93,142.18,519.93,142.16,519.93,142.15,519.94,142.13,519.94,142.11,519.95,142.09,519.96,142.08,519.96,142.06,519.97,142.04,519.98,142.03,519.99,142.01,520.00,141.99,520.01,141.97,520.01,141.94,520.02,141.92,520.02,141.90,520.02,141.87,520.02,141.85,520.02,141.82,520.02,141.79,520.02,141.76,520.02,141.73,520.02,141.70,520.02,141.67,520.02,141.64,520.02,141.60,520.02,141.57,520.02,141.53,520.02,141.49,520.02,141.46,520.02,141.42,520.02,141.38,520.01,141.34,520.01,141.31,520.01,141.27,520.01,141.23,520.01,141.19,520.01,141.15,520.01,141.12,520.01,141.07,520.01,141.03,520.01,140.99,520.00,140.94,519.99,140.89,519.98,140.85,519.97,140.80,519.96,140.75,519.95,140.69,519.93,140.64,519.92,140.58,519.90,140.52,519.88,140.46,519.85,140.38,519.83,140.31,519.79,140.23,519.76,140.15,519.72,140.06,519.68,139.97,519.64,139.87,519.60,139.78,519.55,139.68,519.50,139.58,519.45,139.48,519.40,139.37,519.34,139.27,519.28,139.16,519.22,139.05,519.15,138.94,519.09,138.82,519.02,138.70,518.95,138.58,518.87,138.45,518.79,138.31,518.70,138.17,518.62,138.02,518.53,137.87,518.43,137.72,518.34,137.56,518.23,137.39,518.13,137.22,518.02,137.05,517.91,136.87,517.79,136.69,517.67,136.51,517.55,136.32,517.42,136.13,517.28,135.94,517.15,135.74,517.00,135.54,516.86,135.33,516.71,135.11,516.56,134.88,516.40,134.65,516.24,134.41,516.08,134.17,515.91,133.92,515.74,133.66,515.57,133.40,515.39,133.13,515.21,132.84,515.02,132.55,514.83,132.25,514.62,131.94,514.42,131.62,514.20,131.29,513.98,130.95,513.75,130.59,513.52,130.23,513.28,129.86,513.04,129.49,512.78,129.10,512.52,128.70,512.26,128.29,511.98,127.87,511.70,127.44,511.42,127.01,511.13,126.56,510.83,126.11,510.53,125.64,510.22,125.16,509.90,124.67,509.56,124.17,509.21,123.66,508.84,123.14,508.47,122.60,508.09,122.05,507.70,121.50,507.29,120.93,506.88,120.34,506.45,119.75,506.00,119.15,505.53,118.53,505.03,117.90,504.51,117.27,503.98,116.63,503.45,115.99,502.91,115.33,502.35,114.66,501.77,113.97,501.15,113.27,500.49,112.53,499.78,111.77,499.01,110.97,498.17,110.15,497.29,109.30,496.36,108.44,495.40,107.54,494.39,106.63,493.33,105.68,492.21,104.72,491.03,103.72,489.77,102.70,488.44,101.65,487.02,100.58,485.54,99.49,484.01,98.37,482.43,97.23,480.79,96.06,479.07,94.86,477.26,93.63,475.35,92.37,473.34,91.08,471.21,89.75,468.94,88.40,466.57,87.01,464.12,85.60,461.58,84.15,458.94,82.67,456.18,81.16,453.31,79.62,450.30,78.04,447.15,76.42,443.85,74.77,440.39,73.06,436.79,71.30,433.07,69.50,429.22,67.65,425.23,65.78,421.11,63.88,416.83,61.98,412.39,60.07,407.79,58.16,403.01,56.27,398.05,54.38,392.91,52.47,387.60,50.55,382.11,48.62,376.46,46.69,370.65,44.76,364.68,42.84,358.57,40.93,352.31,39.04,345.91,37.17,339.37,35.31,332.66,33.42,325.73,31.53,318.62,29.65,311.35,27.78,303.96,25.95,296.47,24.17,288.90,22.44,281.30,20.78,273.69,19.21,266.09,17.70,258.44,16.22,250.67,14.77,242.80,13.38,234.87,12.05,226.91,10.79,218.96,9.62,211.04,8.53,203.19,7.55,195.45,6.69,187.83,5.92,180.29,5.22,172.76,4.60,165.26,4.07,157.80,3.63,150.42,3.30,143.14,3.08,135.97,2.97,128.94,3.00,122.06,3.16,115.37,3.45,108.81,3.85,102.33,4.37,95.94,5.01,89.68,5.76,83.57,6.63,77.62,7.63,71.87,8.75,66.33,9.99,61.04,11.36,56.01,12.87,51.20,14.53,46.57,16.33,42.14,18.25,37.91,20.29,33.90,22.43,30.12,24.66,26.57,26.98,23.29,29.37,20.26,31.82,17.52,34.36,15.07,37.02,12.92,39.78,11.04,42.64,9.42,45.57,8.04,48.57,6.87,51.61,5.90,54.68,5.10,57.76,4.46,60.85,3.96,63.97,3.66,67.14,3.61,70.36,3.78,73.62,4.15,76.91,4.68,80.22,5.34,83.55,6.11,86.87,6.94,90.19,7.81,93.50,8.68,96.80,9.62,100.14,10.67,103.48,11.82,106.84,13.06,110.19,14.37,113.54,15.73,116.88,17.12,120.19,18.54,123.47,19.95,126.72,21.35,129.93,22.75,133.11,24.18,136.27,25.64,139.41,27.12,142.54,28.62,145.65,30.15,148.74,31.69,151.82,33.26,154.90,34.84,157.97,36.44,161.03,38.05,164.07,39.68,167.10,41.34,170.11,43.01,173.12,44.71,176.11,46.42,179.10,48.15,182.09,49.89,185.07,51.65,188.06,53.43,191.04,55.22,194.02,57.04,196.99,58.87,199.95,60.72,202.91,62.59,205.87,64.47,208.82,66.36,211.78,68.27,214.73,70.18,217.67,72.11,220.62,74.05,223.56,76.00,226.50,77.97,229.43,79.95,232.36,81.94,235.29,83.94,238.22,85.95,241.15,87.97,244.08,90.00,247.01,92.04,249.94,94.08,252.87,96.14,255.80,98.20,258.73,100.28,261.66,102.36,264.59,104.45,267.51,106.55,270.44,108.65,273.37,110.76,276.30,112.87,279.23,114.98,282.15,117.11,285.08,119.24,288.01,121.38,290.94,123.52,293.87,125.67,296.79,127.82,299.72,129.97,302.65,132.12,305.57,134.28,308.49,136.44,311.41,138.60,314.34,140.77,317.26,142.93,320.18,145.10,323.10,147.28,326.02,149.45,328.93,151.62,331.84,153.80,334.75,155.97,337.66,158.14,340.56,160.31,343.46,162.49,346.37,164.66,349.26,166.84,352.16,169.01,355.05,171.19,357.93,173.36,360.81,175.52,363.69,177.69,366.55,179.85,369.42,182.01,372.28,184.17,375.13,186.33,377.98,188.48,380.83,190.63,383.66,192.78,386.49,194.92,389.31,197.05,392.11,199.18,394.91,201.29,397.70,203.41,400.49,205.52,403.27,207.63,406.04,209.73,408.79,211.82,411.54,213.91,414.28,215.98,417.00,218.04,419.71,220.10,422.41,222.14,425.10,224.18,427.79,226.21,430.46,228.23,433.12,230.24,435.76,232.24,438.40,234.23,441.01,236.21,443.61,238.17,446.18,240.12,448.74,242.05,451.29,243.98,453.83,245.90,456.35,247.80,458.85,249.69,461.33,251.57,463.79,253.43,466.24,255.27,468.65,257.10,471.05,258.92,473.42,260.72,475.78,262.50,478.12,264.28,480.44,266.04,482.74,267.79,485.02,269.51,487.26,271.22,489.48,272.90,491.66,274.55,493.80,276.18,495.91,277.78,497.98,279.35,500.02,280.89,502.03,282.41,504.01,283.91,505.96,285.39,507.89,286.85,509.80,288.29,511.68,289.71,513.55,291.12,515.39,292.52,517.22,293.90,519.02,295.27,520.80,296.62,522.56,297.95,524.29,299.26,525.99,300.55,527.66,301.81,529.30,303.05,530.90,304.26,532.47,305.44,534.01,306.60,535.51,307.74,536.99,308.85,538.43,309.94,539.85,311.00,541.24,312.05,542.60,313.08,543.94,314.09,545.26,315.08,546.55,316.05,547.81,317.01,549.04,317.94,550.25,318.85,551.43,319.75,552.59,320.63,553.72,321.48,554.83,322.32,555.92,323.15,556.99,323.96,558.03,324.74,559.04,325.51,560.03,326.26,560.99,327.00,561.93,327.71,562.85,328.41,563.75,329.09,564.63,329.76,565.49,330.42,566.34,331.06,567.17,331.69,567.98,332.30,568.76,332.89,569.53,333.47,570.28,334.03,571.01,334.58,571.73,335.12,572.43,335.65,573.12,336.17,573.80,336.69,574.46,337.19,575.11,337.67,575.73,338.15,576.35,338.61,576.95,339.06,577.53,339.51,578.11,339.94,578.68,340.37,579.23,340.79,579.79,341.21,580.33,341.62,580.86,342.03,581.39,342.43,581.90,342.82,582.41,343.20,582.90,343.57,583.39,343.94,583.86,344.30,584.33,344.66,584.79,345.01,585.24,345.35,585.68,345.69,586.11,346.01,586.53,346.33,586.95,346.65,587.35,346.95,587.75,347.26,588.13,347.55,588.51,347.84,588.89,348.12,589.25,348.40,589.61,348.67,589.96,348.93,590.30,349.19,590.63,349.44,590.95,349.68,591.27,349.92,591.57,350.15,591.87,350.38,592.16,350.60,592.44,350.81,592.71,351.01,592.97,351.21,593.22,351.40,593.46,351.58,593.70,351.76,593.93,351.93,594.15,352.10,594.37,352.27,594.59,352.43,594.80,352.59,595.00,352.74,595.20,352.90,595.40,353.04,595.58,353.19,595.77,353.33,595.95,353.46,596.12,353.59,596.29,353.72,596.45,353.85,596.61,353.97,596.76,354.08,596.90,354.19,597.03,354.29,597.16,354.39,597.29,354.49,597.42,354.59,597.56,354.69,597.70,354.79,597.85,354.91,598.00,355.03,598.17,355.15,598.34,355.28,598.51,355.41,598.69,355.55,598.86,355.68,599.03,355.81,599.20,355.93,599.35,356.05,599.50,356.16,599.64,356.27,599.77,356.37,599.89,356.46,600.01,356.55,600.12,356.64,600.24,356.72,600.34,356.81,600.45,356.89,600.56,356.97,600.67,357.05,600.78,357.14,600.90,357.23,601.03,357.32,601.15,357.42,601.26,357.50,601.38,357.59,601.48,357.67,601.57,357.74,601.65,357.80,601.71,357.84];
  ctx.beginPath(); ctx.moveTo(P[0],P[1]);
  for(var k=2;k<P.length;k+=2) ctx.lineTo(P[k],P[k+1]);
  ctx.closePath(); ctx.save(); ctx.clip(); ctx.drawImage(off,0,0); ctx.restore();
}
var c2=document.getElementById('ins');
if(c2&&c2.getContext){
  var W2=c2.width,H2=c2.height; var ctx2=c2.getContext('2d'); var im2=ctx2.createImageData(W2,H2); var d2=im2.data;
  var t5=[0,0,0,0];
  for(var py=0;py<H2;py++){
    for(var px=0;px<W2;px++){ var R=0,G=0,B=0;
      for(var sy=0;sy<2;sy++) for(var sx=0;sx<2;sx++){
        var yy=0.5053-((155+py+0.25+0.5*sy)-251)/4062, xx=0.4193+((1601+px+0.25+0.5*sx)-1716)/4878; col(xx,yy,t5,0); R+=t5[0];G+=t5[1];B+=t5[2]; }
      var i=(py*W2+px)*4; d2[i]=R/4; d2[i+1]=G/4; d2[i+2]=B/4; d2[i+3]=255; } }
  ctx2.putImageData(im2,0,0);
}
})();
</script>

</body></html>
